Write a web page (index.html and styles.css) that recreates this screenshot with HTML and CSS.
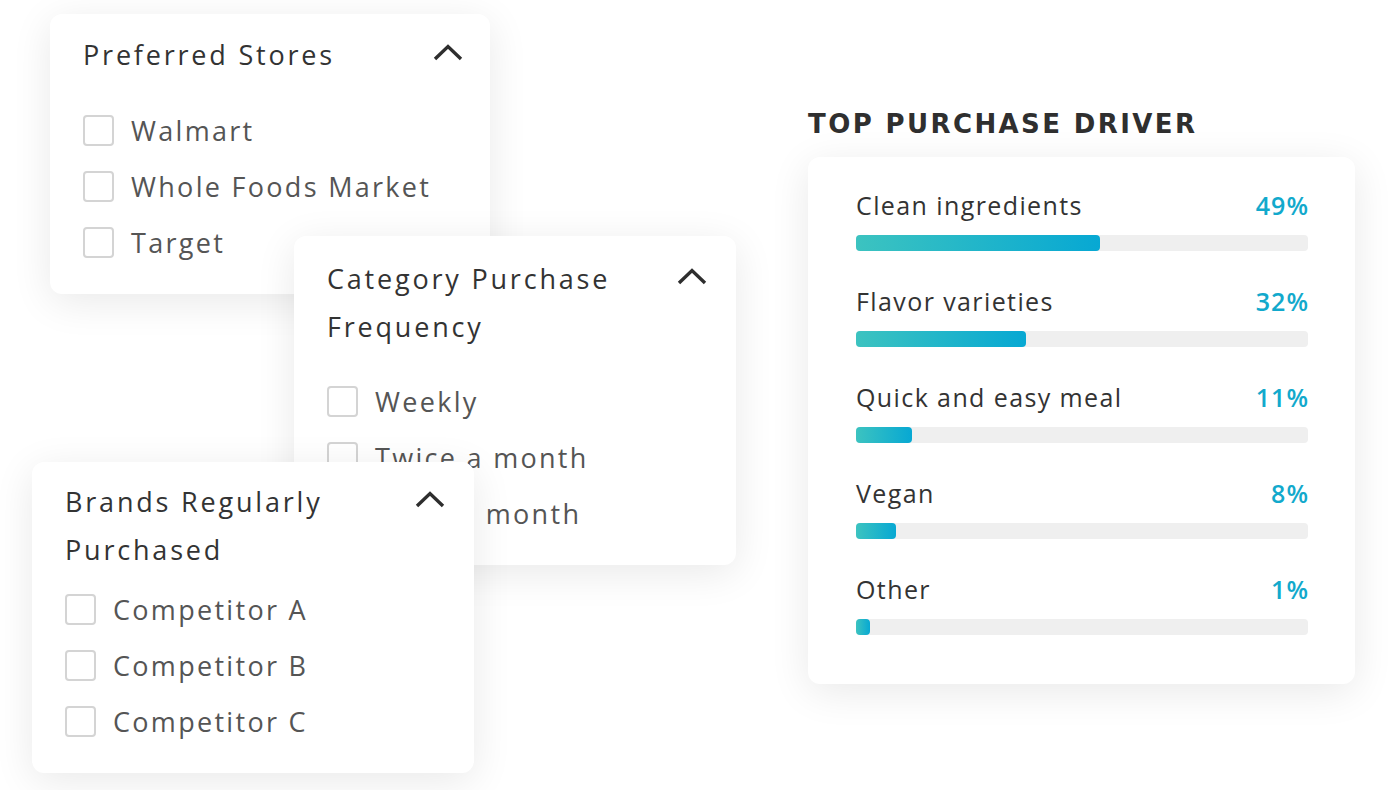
FILE: index.html
```html
<!DOCTYPE html>
<html lang="en">

<head>
   <meta charset="UTF-8">
   <meta name="viewport" content="width=device-width, initial-scale=1.0">
   <title>Shopper Filters</title>
   <link rel="stylesheet" href="styles.css">
</head>

<body>
   <div class="board">

      <!-- store filter -->
      <div class="card filter stores">
         <div class="filter-head">
            <h2 class="filter-title">Preferred Stores</h2>
            <svg class="chevron" viewBox="0 0 30 17"><path d="M2 15 L15 2.5 L28 15" /></svg>
         </div>
         <ul class="options">
            <li><span class="box"></span>Walmart</li>
            <li><span class="box"></span>Whole Foods Market</li>
            <li><span class="box"></span>Target</li>
         </ul>
      </div>

      <!-- frequency filter -->
      <div class="card filter frequency">
         <div class="filter-head">
            <h2 class="filter-title">Category Purchase Frequency</h2>
            <svg class="chevron" viewBox="0 0 30 17"><path d="M2 15 L15 2.5 L28 15" /></svg>
         </div>
         <ul class="options">
            <li><span class="box"></span>Weekly</li>
            <li><span class="box"></span>Twice a month</li>
            <li><span class="box"></span>Once a month</li>
         </ul>
      </div>

      <!-- brand filter -->
      <div class="card filter brands">
         <div class="filter-head">
            <h2 class="filter-title">Brands Regularly Purchased</h2>
            <svg class="chevron" viewBox="0 0 30 17"><path d="M2 15 L15 2.5 L28 15" /></svg>
         </div>
         <ul class="options">
            <li><span class="box"></span>Competitor A</li>
            <li><span class="box"></span>Competitor B</li>
            <li><span class="box"></span>Competitor C</li>
         </ul>
      </div>

      <!-- purchase drivers -->
      <div class="drivers">
         <h1 class="drivers-title">TOP PURCHASE DRIVER</h1>
         <div class="card drivers-card">
            <div class="driver">
               <div class="driver-row"><span>Clean ingredients</span><span class="pct">49%</span></div>
               <div class="track"><div class="fill" style="width: 54%"></div></div>
            </div>
            <div class="driver">
               <div class="driver-row"><span>Flavor varieties</span><span class="pct">32%</span></div>
               <div class="track"><div class="fill" style="width: 37.6%"></div></div>
            </div>
            <div class="driver">
               <div class="driver-row"><span>Quick and easy meal</span><span class="pct">11%</span></div>
               <div class="track"><div class="fill" style="width: 12.4%"></div></div>
            </div>
            <div class="driver">
               <div class="driver-row"><span>Vegan</span><span class="pct">8%</span></div>
               <div class="track"><div class="fill" style="width: 8.8%"></div></div>
            </div>
            <div class="driver">
               <div class="driver-row"><span>Other</span><span class="pct">1%</span></div>
               <div class="track"><div class="fill" style="width: 3%"></div></div>
            </div>
         </div>
      </div>

   </div>
</body>

</html>
```

FILE: styles.css
```css
* {
   box-sizing: border-box;
}

body {
   margin: 0;
   background-color: white;
   font-family: "Open Sans", "Noto Sans", sans-serif;
   color: #333;
}

.board {
   position: relative;
   width: 1388px;
   height: 790px;
   overflow: hidden;
}

.card {
   background-color: white;
   border-radius: 12px;
   box-shadow: 0 8px 40px rgba(0, 0, 0, 0.09);
}

/* filter cards sit on the canvas and overlap each other */
.filter {
   position: absolute;
   width: 442px;
   padding: 17px 29px 24px 33px;
}

.stores {
   left: 50px;
   top: 14px;
   width: 440px;
   padding-right: 27px;
}

.frequency {
   left: 294px;
   top: 236px;
   padding-top: 19px;
}

.brands {
   left: 32px;
   top: 462px;
   padding-top: 16px;
}

.filter-head {
   display: flex;
   align-items: flex-start;
   gap: 20px;
}

.filter-title {
   flex: 1;
   margin: 0;
   font-size: 27px;
   font-weight: 400;
   line-height: 48px;
   letter-spacing: 2.8px;
   color: #333;
}

.chevron {
   width: 30px;
   height: 17px;
   margin-top: 13px;
   flex-shrink: 0;
}

.chevron path {
   fill: none;
   stroke: #2e2e2e;
   stroke-width: 3.4;
}

.options {
   list-style: none;
   margin: 23px 0 0;
   padding: 0;
}

.frequency .options {
   margin-top: 22px;
}

.brands .options {
   margin-top: 7px;
}

.options li {
   display: flex;
   align-items: center;
   gap: 17px;
   height: 56px;
   font-size: 27px;
   letter-spacing: 2.3px;
   color: #555;
}

.box {
   width: 31px;
   height: 31px;
   border: 2px solid #d4d4d4;
   border-radius: 4px;
   flex-shrink: 0;
}

/* drivers panel */
.drivers {
   position: absolute;
   left: 808px;
   top: 106px;
   width: 547px;
}

.drivers-title {
   margin: 0 0 15px;
   font-family: "DejaVu Sans", sans-serif;
   font-size: 26px;
   font-weight: 700;
   line-height: 36px;
   letter-spacing: 2.4px;
   color: #2f2f2f;
}

.drivers-card {
   display: flex;
   flex-direction: column;
   gap: 34px;
   padding: 32px 47px 49px 48px;
}

.driver-row {
   display: flex;
   justify-content: space-between;
   align-items: center;
   height: 32px;
   margin-bottom: 14px;
   font-size: 25px;
   letter-spacing: 1.4px;
   color: #333;
}

.pct {
   margin-right: -1px;
   font-weight: 600;
   letter-spacing: 1px;
   color: #12a9cc;
}

.track {
   height: 16px;
   border-radius: 4px;
   background-color: #efefef;
}

.fill {
   height: 100%;
   border-radius: 4px;
   background: linear-gradient(to right, #3cc3c0, #07a8d3);
}
```
